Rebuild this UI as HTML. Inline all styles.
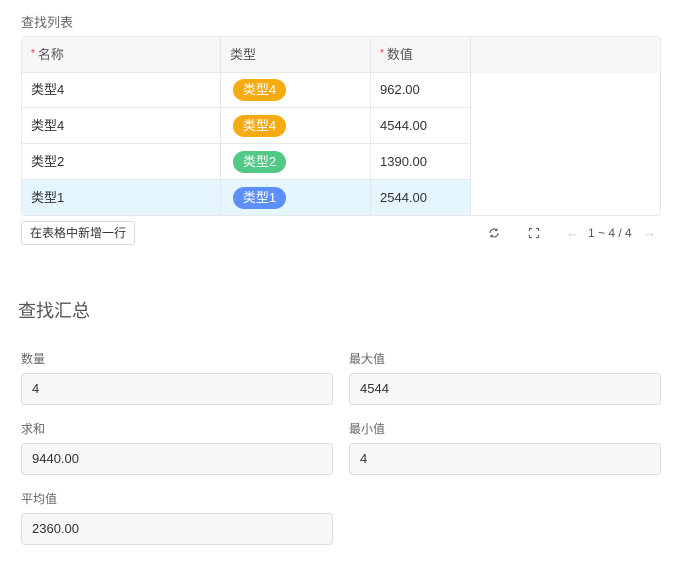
<!DOCTYPE html>
<html><head><meta charset="utf-8"><style>
*{box-sizing:border-box;margin:0;padding:0}
body{width:683px;height:574px;background:#fff;font-family:"Liberation Sans","Noto Sans CJK SC",sans-serif;font-size:13px;color:#333;position:relative;overflow:hidden}
.abs{position:absolute}
.t{left:21px;top:36px;width:640px;height:180px;border:1px solid #e8e8e8;border-radius:4px;overflow:hidden}
.c{position:absolute;height:36px;line-height:36px;padding-left:9px;border-right:1px solid #e8e8e8;border-bottom:1px solid #e8e8e8}
.h{background:#f7f7f7;color:#555}
.req{color:#f5222d;font-size:10px;margin-right:3px;vertical-align:top;position:relative;top:-1px}
.tag{display:inline-block;width:53px;height:22px;line-height:22px;border-radius:11px;color:#fff;text-align:center;margin-left:3px;vertical-align:middle;position:relative;top:-1px}
.lbl{font-size:12px;color:#666}
.inp{height:32px;width:312px;border:1px solid #ddd;border-radius:4px;background:#f7f7f7;line-height:30px;padding-left:10px;color:#333}
</style></head><body>
<div class="abs" style="left:21px;top:12px;color:#666">查找列表</div>
<div class="abs t">
<div class="c h" style="left:0;top:0;width:199px"><span class="req">*</span>名称</div>
<div class="c h" style="left:199px;top:0;width:150px">类型</div>
<div class="c h" style="left:349px;top:0;width:100px"><span class="req">*</span>数值</div>
<div class="c h" style="left:449px;top:0;width:191px;border-right:none;border-bottom:none"></div>

<div class="c" style="left:0;top:35px;width:199px">类型4</div>
<div class="c" style="left:199px;top:35px;width:150px"><span class="tag" style="background:#f7ab13">类型4</span></div>
<div class="c" style="left:349px;top:35px;width:100px">962.00</div>
<div class="c" style="left:0;top:71px;width:199px">类型4</div>
<div class="c" style="left:199px;top:71px;width:150px"><span class="tag" style="background:#f7ab13">类型4</span></div>
<div class="c" style="left:349px;top:71px;width:100px">4544.00</div>
<div class="c" style="left:0;top:107px;width:199px">类型2</div>
<div class="c" style="left:199px;top:107px;width:150px"><span class="tag" style="background:#52c887">类型2</span></div>
<div class="c" style="left:349px;top:107px;width:100px">1390.00</div>
<div class="c" style="left:0;top:143px;width:199px;background:#e6f6fe;border-bottom:none">类型1</div>
<div class="c" style="left:199px;top:143px;width:150px;background:#e6f6fe;border-bottom:none"><span class="tag" style="background:#5b8ff9">类型1</span></div>
<div class="c" style="left:349px;top:143px;width:100px;background:#e6f6fe;border-bottom:none">2544.00</div>
</div>
<div class="abs" style="left:21px;top:221px;width:114px;height:24px;border:1px solid #d9d9d9;border-radius:3px;line-height:22px;text-align:center;color:#333;font-size:12px">在表格中新增一行</div>
<svg class="abs" style="left:488px;top:227px" width="12" height="12" viewBox="0 0 12 12" fill="none" stroke="#666" stroke-width="1.2"><path d="M2 6a4 4 0 0 1 7-2.6M10 6a4 4 0 0 1-7 2.6"/><path d="M9 1.5v2h-2M3 10.5v-2h2"/></svg>
<svg class="abs" style="left:528px;top:227px" width="12" height="12" viewBox="0 0 12 12" fill="none" stroke="#666" stroke-width="1.2"><path d="M1.5 4V1.5H4M8 1.5h2.5V4M10.5 8v2.5H8M4 10.5H1.5V8"/></svg>
<div class="abs" style="left:566px;top:225px;color:#ccc">←</div>
<div class="abs" style="left:588px;top:226px;font-size:12px;color:#555">1 ~ 4 / 4</div>
<div class="abs" style="left:643px;top:225px;color:#ccc">→</div>

<div class="abs" style="left:18px;top:297px;font-size:18px;color:#555">查找汇总</div>
<div class="abs lbl" style="left:21px;top:350px">数量</div>
<div class="abs inp" style="left:21px;top:373px">4</div>
<div class="abs lbl" style="left:349px;top:350px">最大值</div>
<div class="abs inp" style="left:349px;top:373px">4544</div>
<div class="abs lbl" style="left:21px;top:420px">求和</div>
<div class="abs inp" style="left:21px;top:443px">9440.00</div>
<div class="abs lbl" style="left:349px;top:420px">最小值</div>
<div class="abs inp" style="left:349px;top:443px">4</div>
<div class="abs lbl" style="left:21px;top:490px">平均值</div>
<div class="abs inp" style="left:21px;top:513px">2360.00</div>
</body></html>
